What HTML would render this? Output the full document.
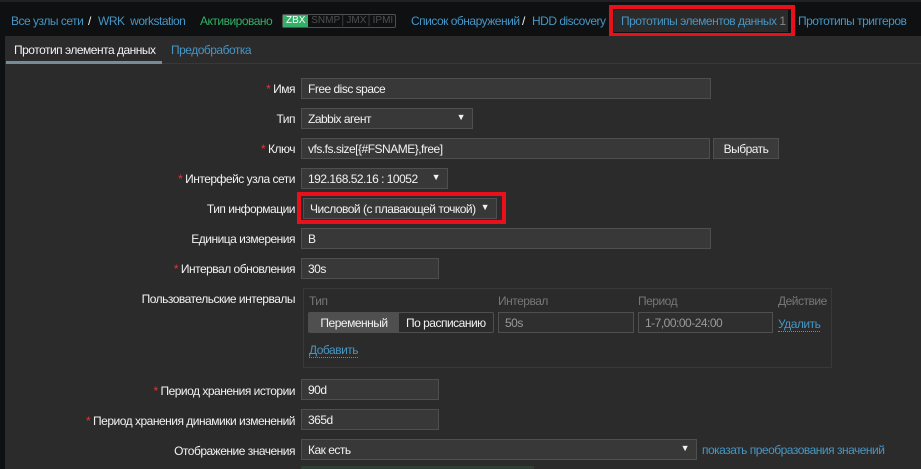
<!DOCTYPE html>
<html><head><meta charset="utf-8"><style>
*{box-sizing:border-box;margin:0;padding:0}
body{width:921px;height:469px;overflow:hidden;background:#0e1012;font-family:"Liberation Sans",Arial,sans-serif;font-size:12px;letter-spacing:-0.5px;color:#f2f2f2;position:relative}
.a{position:absolute;white-space:nowrap}
.top{position:absolute;left:0;top:0;width:921px;height:36px;background:#0e1012;border-top:2px solid #1f2125}
.lnk{color:#4796c4}
.main{position:absolute;left:5px;top:36px;width:916px;height:433px;background:#2b2b2b}
.tabs{position:absolute;left:5px;top:36px;width:916px;height:28px;border-bottom:1px solid #383838}
.inp{position:absolute;background:#383838;border:1px solid #4f4f4f;height:21px;padding:3px 6px;color:#f2f2f2;white-space:nowrap}
.lbl{position:absolute;right:626px;white-space:nowrap;color:#f2f2f2}
.req{color:#e33734}
.arr{position:absolute;right:7px;top:3px;font-size:9px}
.red{position:absolute;border:4px solid #e8111b}
</style></head><body>
<div class="top"></div>
<div class="a lnk" style="left:11px;top:14px">Все узлы сети</div>
<div class="a" style="left:88px;top:14px;color:#f2f2f2">/</div>
<div class="a lnk" style="left:98px;top:14px">WRK&nbsp; workstation</div>
<div class="a" style="left:200px;top:14px;color:#34af67">Активировано</div>
<div class="a" style="left:282px;top:14px;width:114px;height:14px;border:1px solid #4f4f4f;border-radius:2px;font-size:10px;line-height:12px;color:#4f4f4f;letter-spacing:0"><span style="background:#34af67;color:#fff;padding:0 3px;display:inline-block;height:12px">ZBX</span> SNMP│JMX│IPMI</div>
<div class="a lnk" style="left:411px;top:14px">Список обнаружений</div>
<div class="a" style="left:522px;top:14px">/</div>
<div class="a lnk" style="left:532px;top:14px">HDD discovery</div>
<div class="a" style="left:614px;top:10px;width:174px;height:22px;background:#2b2b2b"></div>
<div class="red" style="left:609px;top:5px;width:186px;height:32px"></div>
<div class="a lnk" style="left:621px;top:14px">Прототипы элементов данных&nbsp;<span style="color:#888">1</span></div>
<div class="a lnk" style="left:798px;top:14px">Прототипы триггеров</div>
<div class="main"></div>
<div class="tabs"></div>
<div class="a" style="left:14px;top:43px">Прототип элемента данных</div>
<div class="a" style="left:6px;top:61px;width:156px;height:3px;background:#768d99"></div>
<div class="a lnk" style="left:171px;top:43px">Предобработка</div>

<div class="lbl" style="top:82px"><span class="req">*</span> Имя</div>
<div class="inp" style="left:301px;top:78px;width:410px">Free disc space</div>
<div class="lbl" style="top:112px">Тип</div>
<div class="inp" style="left:301px;top:108px;width:172px">Zabbix агент<span class="arr">▼</span></div>
<div class="lbl" style="top:142px"><span class="req">*</span> Ключ</div>
<div class="inp" style="left:301px;top:138px;width:409px">vfs.fs.size[{#FSNAME},free]</div>
<div class="inp" style="left:713px;top:138px;width:66px;background:#3b3b3b;text-align:center;padding:3px 0">Выбрать</div>
<div class="lbl" style="top:172px"><span class="req">*</span> Интерфейс узла сети</div>
<div class="inp" style="left:301px;top:168px;width:147px">192.168.52.16 : 10052<span class="arr">▼</span></div>
<div class="lbl" style="top:202px">Тип информации</div>
<div class="inp" style="left:303px;top:198px;width:194px">Числовой (с плавающей точкой)<span class="arr">▼</span></div>
<div class="red" style="left:297px;top:192px;width:209px;height:32px"></div>
<div class="lbl" style="top:232px">Единица измерения</div>
<div class="inp" style="left:301px;top:228px;width:410px">B</div>
<div class="lbl" style="top:262px"><span class="req">*</span> Интервал обновления</div>
<div class="inp" style="left:301px;top:258px;width:138px">30s</div>
<div class="lbl" style="top:292px">Пользовательские интервалы</div>
<div class="a" style="left:303px;top:288px;width:529px;height:80px;border:1px solid #383838"></div>
<div class="a" style="left:309px;top:294px;color:#777">Тип</div>
<div class="a" style="left:498px;top:294px;color:#777">Интервал</div>
<div class="a" style="left:638px;top:294px;color:#777">Период</div>
<div class="a" style="left:778px;top:294px;color:#777">Действие</div>
<div class="a" style="left:308px;top:312px;width:186px;height:21px;border:1px solid #4f4f4f;border-radius:2px;background:#2b2b2b"></div>
<div class="a" style="left:309px;top:313px;width:90px;height:19px;background:#4f4f4f;padding:3px 0;text-align:center">Переменный</div>
<div class="a" style="left:406px;top:316px">По расписанию</div>
<div class="inp" style="left:498px;top:312px;width:136px;background:#2f2f2f;color:#999">50s</div>
<div class="inp" style="left:638px;top:312px;width:135px;background:#2f2f2f;color:#999">1-7,00:00-24:00</div>
<div class="a lnk" style="left:778px;top:317px;border-bottom:1px dotted #4796c4">Удалить</div>
<div class="a lnk" style="left:309px;top:343px;border-bottom:1px dotted #4796c4">Добавить</div>
<div class="lbl" style="top:384px"><span class="req">*</span> Период хранения истории</div>
<div class="inp" style="left:301px;top:379px;width:138px">90d</div>
<div class="lbl" style="top:414px"><span class="req">*</span> Период хранения динамики изменений</div>
<div class="inp" style="left:301px;top:409px;width:138px">365d</div>
<div class="lbl" style="top:444px">Отображение значения</div>
<div class="inp" style="left:301px;top:439px;width:396px">Как есть<span class="arr">▼</span></div>
<div class="a lnk" style="left:702px;top:443px">показать преобразования значений</div>
<div class="a" style="left:301px;top:466px;width:233px;height:3px;background:#2d4033"></div>
</body></html>
